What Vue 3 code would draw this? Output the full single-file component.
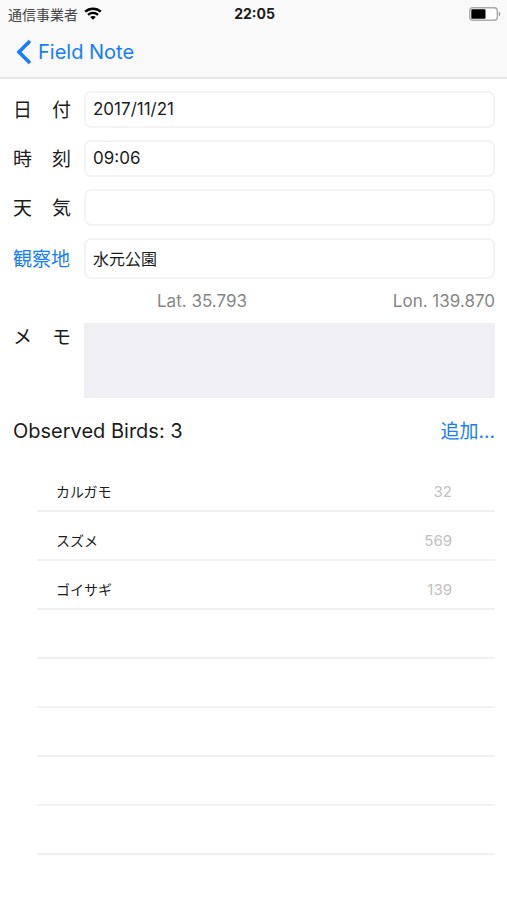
<script setup>
import { ref } from 'vue'

const date = ref('2017/11/21')
const time = ref('09:06')
const weather = ref('')
const place = ref('水元公園')
const memo = ref('')
const birds = [
  { name: 'カルガモ', count: 32 },
  { name: 'スズメ', count: 569 },
  { name: 'ゴイサギ', count: 139 },
]
const emptyRows = 5
</script>

<template>
  <div class="screen">
    <header class="top">
      <div class="status">
        <div class="carrier">
          <span>通信事業者</span>
          <svg class="wifi" viewBox="0 0 18 13" aria-hidden="true">
            <path d="M1.200 4.700C5.500.6 12.500.6 16.800 4.700" fill="none" stroke="#000" stroke-width="2.500" />
            <path d="M4 7.800C6.800 5.200 11.200 5.200 14 7.800" fill="none" stroke="#000" stroke-width="2.300" />
            <path d="M9 12.800 6.200 10C7.800 8.500 10.200 8.500 11.800 10Z" fill="#000" />
          </svg>
        </div>
        <span class="clock">22:05</span>
        <svg class="battery" viewBox="0 0 32 14" aria-hidden="true">
          <rect x="0.700" y="0.700" width="27.600" height="12.600" rx="3" fill="#fff" stroke="#aaa" stroke-width="1.400" />
          <rect x="2.300" y="2.300" width="14.200" height="9.400" rx="0.800" fill="#000" />
          <path d="M29.800 4.700C31.800 5.300 31.800 8.700 29.800 9.300Z" fill="#999" />
        </svg>
      </div>
      <nav class="nav">
        <a class="back" href="#">
          <svg class="chevron" viewBox="0 0 16 26" aria-hidden="true">
            <path d="M14 2 3 13 14 24" fill="none" stroke="#147efb" stroke-width="3.600" />
          </svg>
          <span>Field Note</span>
        </a>
      </nav>
    </header>

    <main class="content">
      <form class="form" @submit.prevent>
        <label class="label" for="date"><span>日</span><span>付</span></label>
        <input id="date" v-model="date" class="field" type="text" />
        <label class="label" for="time"><span>時</span><span>刻</span></label>
        <input id="time" v-model="time" class="field" type="text" />
        <label class="label" for="weather"><span>天</span><span>気</span></label>
        <input id="weather" v-model="weather" class="field" type="text" />
        <label class="label link" for="place">観察地</label>
        <input id="place" v-model="place" class="field place" type="text" />
        <div class="coords">
          <span class="lat">Lat. 35.793</span>
          <span>Lon. 139.870</span>
        </div>
        <label class="label memo-label" for="memo"><span>メ</span><span>モ</span></label>
        <textarea id="memo" v-model="memo" class="memo"></textarea>
      </form>

      <section>
        <div class="heading">
          <h2>Observed Birds: {{ birds.length }}</h2>
          <button type="button" class="add">追加...</button>
        </div>
        <ul class="birds">
          <li v-for="bird in birds" :key="bird.name">
            <span>{{ bird.name }}</span>
            <span class="count">{{ bird.count }}</span>
          </li>
          <li v-for="n in emptyRows" :key="n"></li>
        </ul>
      </section>
    </main>
  </div>
</template>

<style>
body {
  margin: 0;
  background: #fff;
}
</style>

<style scoped>
.screen {
  font-family: Inter, "Noto Sans CJK JP", sans-serif;
  color: #1c1c1c;
}
.top {
  background: #f9f9f9;
  border-bottom: 2px solid #e6e6e6;
}
.status {
  display: grid;
  grid-template-columns: 1fr auto 1fr;
  align-items: center;
  height: 27px;
  padding: 0 6px 0 8px;
}
.carrier {
  display: flex;
  align-items: center;
  gap: 6px;
  color: #444;
  font-size: 14px;
}
.wifi {
  width: 18px;
  height: 13px;
}
.clock {
  font-size: 14px;
  font-weight: 700;
}
.battery {
  justify-self: end;
  width: 32px;
  height: 14px;
}
.nav {
  display: flex;
  align-items: center;
  height: 50px;
  padding: 0 16px;
}
.back {
  display: flex;
  align-items: center;
  gap: 6px;
  color: #147efb;
  font-size: 20px;
  text-decoration: none;
}
.chevron {
  width: 16px;
  height: 26px;
}
.content {
  padding: 12px 12px 0 13px;
}
.form {
  display: grid;
  grid-template-columns: 58px 1fr;
  column-gap: 13px;
  row-gap: 12px;
  align-items: center;
}
.label {
  display: flex;
  justify-content: space-between;
  padding-top: 3px;
  font-size: 19px;
  line-height: 24px;
}
.link {
  color: #147efb;
}
.field {
  box-sizing: border-box;
  width: 100%;
  height: 37px;
  padding: 0 7px 2px;
  border: 2px solid #f3f3f3;
  border-radius: 7px;
  background: #fff;
  color: #1c1c1c;
  font: inherit;
  font-size: 17px;
}
.place {
  height: 41px;
  font-size: 16px;
}
.coords {
  grid-column: 2;
  display: flex;
  justify-content: space-between;
  color: #868686;
  font-size: 17px;
  line-height: 20px;
}
.lat {
  padding-left: 73px;
}
.memo-label {
  align-self: start;
}
.memo {
  box-sizing: border-box;
  display: block;
  width: 100%;
  height: 75px;
  border: 0;
  background: #efeff4;
  font: inherit;
  resize: none;
}
.heading {
  display: flex;
  align-items: center;
  justify-content: space-between;
  padding: 19px 0 18px;
}
h2 {
  margin: 0;
  font-size: 20px;
  font-weight: 400;
  line-height: 28px;
}
.add {
  padding: 2px 0 0;
  border: 0;
  background: none;
  color: #147efb;
  font: inherit;
  font-size: 19px;
  line-height: 26px;
}
.birds {
  margin: 0;
  padding: 0 0 0 24px;
  list-style: none;
}
.birds li {
  box-sizing: border-box;
  display: flex;
  align-items: center;
  justify-content: space-between;
  height: 49px;
  padding: 9px 43px 0 19px;
  border-bottom: 2px solid #f1f1f1;
  font-size: 14px;
}
.birds .count {
  color: #c0c0c0;
  font-size: 15px;
}
</style>
